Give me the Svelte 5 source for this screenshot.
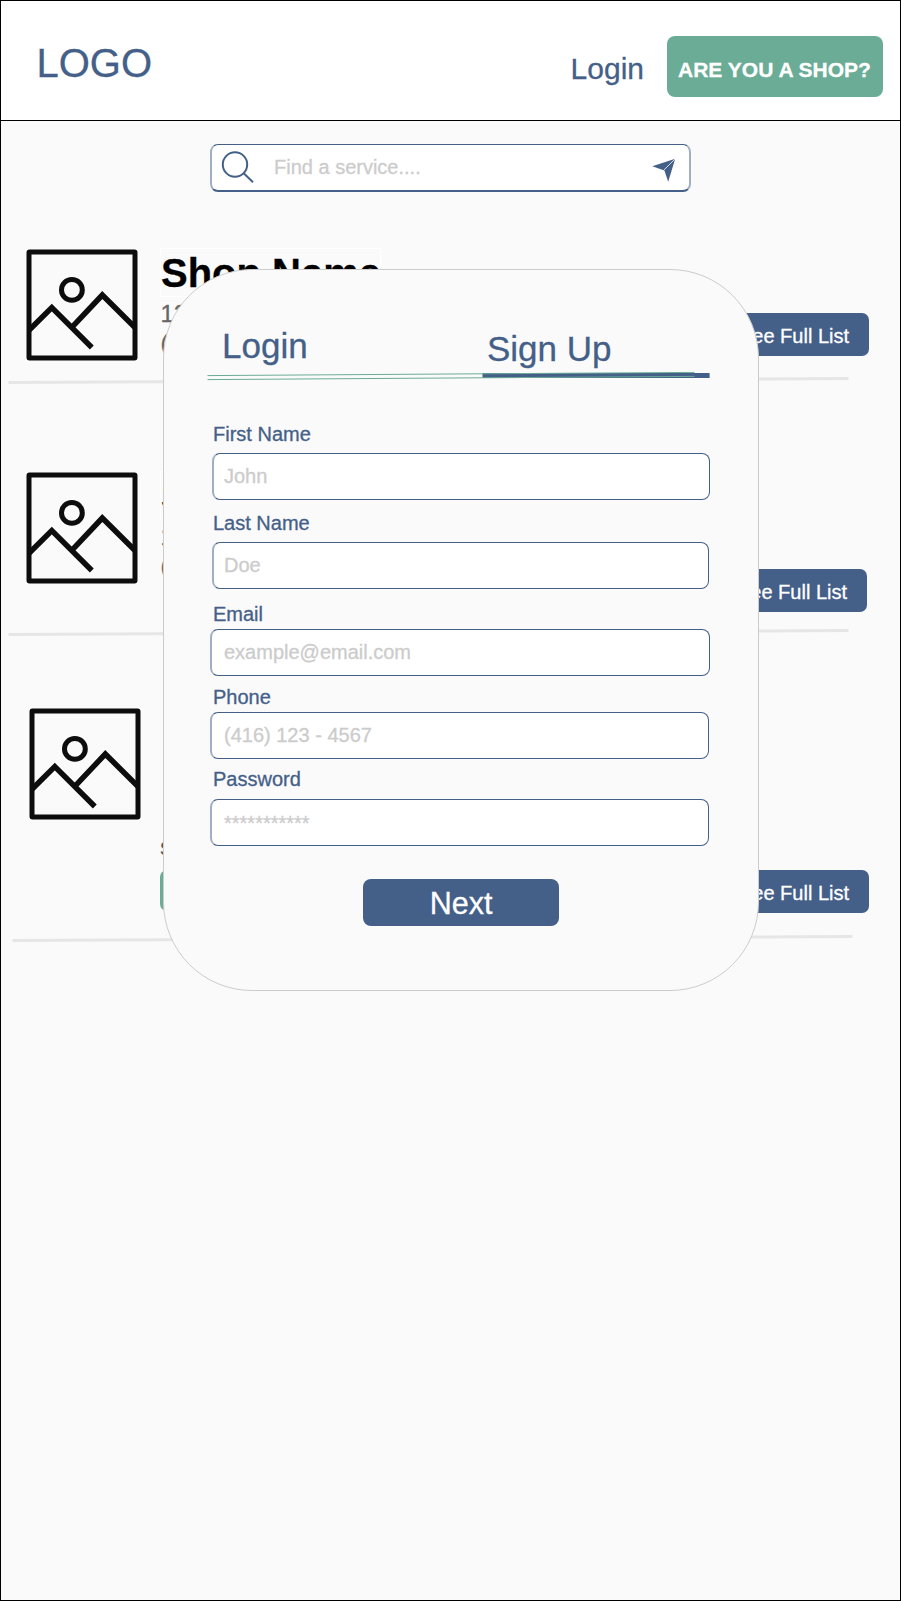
<script>
  const shops = [
    { kind: 'first', name: 'Shop Name', address: '12', phone: '(' },
    { kind: 'second', name: 'S', address: '1', phone: '(' },
    { kind: 'third', service: 'S' }
  ];

  const fields = [
    { id: 'first', label: 'First Name', hint: 'John' },
    { id: 'last', label: 'Last Name', hint: 'Doe' },
    { id: 'email', label: 'Email', hint: 'example@email.com' },
    { id: 'phone', label: 'Phone', hint: '(416) 123 - 4567' },
    { id: 'password', label: 'Password', hint: '***********' }
  ];
</script>

<div class="page">
  <header>
    <span class="logo">LOGO</span>
    <nav>
      <span class="login">Login</span>
      <button class="cta">ARE YOU A SHOP?</button>
    </nav>
  </header>

  <div class="search">
    <svg class="lens" width="34" height="34" viewBox="0 0 34 34">
      <circle cx="14" cy="14.5" r="12.2" />
      <path d="M22.7 23.2L32 32.3" />
    </svg>
    <span>Find a service....</span>
    <svg class="plane" width="24" height="24" viewBox="0 0 24 24">
      <path d="M.3 8.2L23.2.8L16.2 23.8L12.4 12.5Z" />
      <path class="fold" d="M23.2.8L11.6 12.3" />
    </svg>
  </div>

  <main>
    {#each shops as shop}
      <section class="shop {shop.kind}">
        <svg class="thumb" width="112" height="112" viewBox="0 0 112 112">
          <rect x="3" y="3" width="106" height="106" rx=".5" />
          <circle cx="45.9" cy="40.9" r="10.4" />
          <path d="M3 81.3L25.8 58.6L65.8 98.5M46.5 77.7L76.3 46L109 78.5" />
        </svg>
        <div class="info">
          {#if shop.name}
            <h2>{shop.name}</h2>
            <p>{shop.address}</p>
            <p class="tel">{shop.phone}</p>
          {:else}
            <p class="service">{shop.service}</p>
            <div class="tag"></div>
          {/if}
        </div>
        <button class="full">See Full List</button>
        <svg class="rule" width="842" height="8" viewBox="0 0 842 8">
          <path d="M.5 5.5L840.5 1.5" />
        </svg>
      </section>
    {/each}
  </main>

  <div class="modal">
    <div class="tabs">
      <span class="tab">Login</span>
      <span class="tab active">Sign Up</span>
    </div>
    <svg class="underline" width="504" height="12" viewBox="0 0 504 12">
      <path class="bar" d="M275.5 5.5H502.6" />
      <path class="link" d="M.5 5.6L487.5 2.4M.5 9.6L487.5 6.4" />
    </svg>
    <form>
      {#each fields as field}
        <div class="field {field.id}">
          <span class="label">{field.label}</span>
          <div class="input"><span>{field.hint}</span></div>
        </div>
      {/each}
    </form>
    <button class="next">Next</button>
  </div>
</div>

<style>
  .page {
    position: relative;
    box-sizing: border-box;
    width: 901px;
    height: 1601px;
    border: 1px solid #000;
    background: #fafafa;
    overflow: hidden;
    font-family: "Liberation Sans", Arial, sans-serif;
    font-size: 20px;
    color: #446088;
    -webkit-text-stroke: 0.3px currentColor;
  }
  button {
    border: 0;
    padding: 0;
    font: inherit;
    color: #fff;
    white-space: nowrap;
  }
  svg {
    display: block;
    fill: none;
    flex: none;
  }
  header {
    display: flex;
    justify-content: space-between;
    align-items: flex-start;
    box-sizing: border-box;
    height: 120px;
    padding: 35px 17px 0 35.5px;
    background: #fff;
    border-bottom: 1px solid #000;
  }
  .logo {
    font-size: 40px;
    line-height: 54px;
  }
  nav {
    display: flex;
    gap: 23px;
  }
  .login {
    font-size: 30px;
    line-height: 65px;
  }
  .cta {
    width: 216px;
    height: 61px;
    padding: 6px 1px 0 0;
    border-radius: 8px;
    background: #6aac96;
    font-size: 21px;
    font-weight: bold;
  }
  .search {
    display: flex;
    box-sizing: border-box;
    width: 481px;
    height: 48px;
    margin: 23px 0 0 209px;
    border: solid #446088;
    border-width: 1px 2px 2px;
    border-left-color: #a1afc3;
    border-right-color: #a1afc3;
    border-radius: 8px;
    background: #fff;
    color: #ccc;
  }
  .search span {
    flex: 1;
    margin-left: 19px;
    line-height: 44px;
  }
  .lens {
    margin: 5px 0 0 9px;
    stroke: #446088;
    stroke-width: 2;
  }
  .plane {
    margin: 13px 13px 0 0;
    fill: #446088;
  }
  .plane .fold {
    stroke: #fff;
    stroke-width: .8;
  }
  main {
    padding-top: 57px;
  }
  .shop {
    display: grid;
    grid-template-columns: 160px 558px 151px;
    grid-template-rows: 128px 8px;
    align-items: start;
    margin-bottom: 87px;
  }
  .thumb {
    margin-left: 25px;
    stroke: #0d0d0d;
    stroke-width: 5;
  }
  .thumb path {
    stroke-width: 5.5;
  }
  .rule {
    grid-column: 1 / -1;
    margin-left: 7px;
    stroke: #e6e6e6;
    stroke-width: 3;
  }
  h2 {
    box-sizing: border-box;
    width: 221px;
    height: 49px;
    margin: -1px 0 0 -1px;
    border: 1px solid #fff;
    color: #000;
    font-size: 40px;
    line-height: 49px;
    white-space: nowrap;
  }
  p {
    margin: 2px 0 0 -0.5px;
    color: #666;
    font-size: 24px;
    line-height: 29px;
  }
  .tel {
    margin-top: 0;
  }
  .full {
    width: 150px;
    height: 43px;
    margin-top: 64px;
    padding-top: 3px;
    border-radius: 7px;
    background: #446088;
  }
  .second {
    grid-template-rows: 157px 8px;
    margin-bottom: 71px;
  }
  .second .full {
    width: 148px;
    margin-top: 97px;
    padding-right: 2px;
  }
  .third {
    grid-template-rows: 227px 8px;
  }
  .third .thumb {
    margin-left: 28px;
  }
  .third .full {
    margin-top: 162px;
  }
  .third .rule {
    margin-left: 11px;
  }
  .service {
    margin: 130px 0 0 -1px;
    font-size: 18px;
    line-height: 22px;
    color: #555;
  }
  .tag {
    width: 120px;
    height: 41px;
    margin: 10px 0 0 -1px;
    border-radius: 7px;
    background: #6aac96;
  }
  .modal {
    position: absolute;
    left: 162px;
    top: 268px;
    box-sizing: border-box;
    width: 596px;
    height: 722px;
    padding: 56px 0 0 43px;
    border: 1px solid #ccc;
    border-radius: 89px;
    background: #fafafa;
  }
  .tabs {
    display: flex;
    height: 44px;
    padding-left: 15px;
    font-size: 35px;
    line-height: 40px;
  }
  .tab {
    width: 265px;
  }
  .tab.active {
    padding-top: 3px;
  }
  .underline .bar {
    stroke: #446088;
    stroke-width: 5;
  }
  .underline .link {
    stroke: #6aac96;
    stroke-width: 1;
  }
  form {
    padding: 40px 0 0 3px;
  }
  .field {
    display: flex;
    flex-direction: column;
    gap: 7px;
    margin-bottom: 11px;
  }
  .label {
    padding-left: 3px;
    line-height: 24px;
  }
  .input {
    box-sizing: border-box;
    width: 500px;
    height: 47px;
    padding-left: 12px;
    border: 1px solid #446088;
    border-left: 2px solid #a1afc3;
    border-radius: 8px;
    background: #fff;
    color: #ccc;
    line-height: 45px;
  }
  .first .input, .last .input {
    width: 498px;
    margin-left: 2px;
    padding-left: 10px;
  }
  .last .input {
    width: 497px;
  }
  .last {
    margin-bottom: 13px;
  }
  .email, .phone {
    gap: 3px;
  }
  .email {
    margin-bottom: 9px;
  }
  .phone {
    margin-bottom: 8px;
  }
  .phone .input, .password .input {
    width: 499px;
  }
  .password {
    gap: 8px;
    margin-bottom: 0;
  }
  .password .input {
    line-height: 47px;
  }
  .next {
    display: block;
    width: 196px;
    height: 47px;
    margin: 33px 0 0 156px;
    border-radius: 8px;
    background: #446088;
    font-size: 30.5px;
    line-height: 49px;
  }
</style>
